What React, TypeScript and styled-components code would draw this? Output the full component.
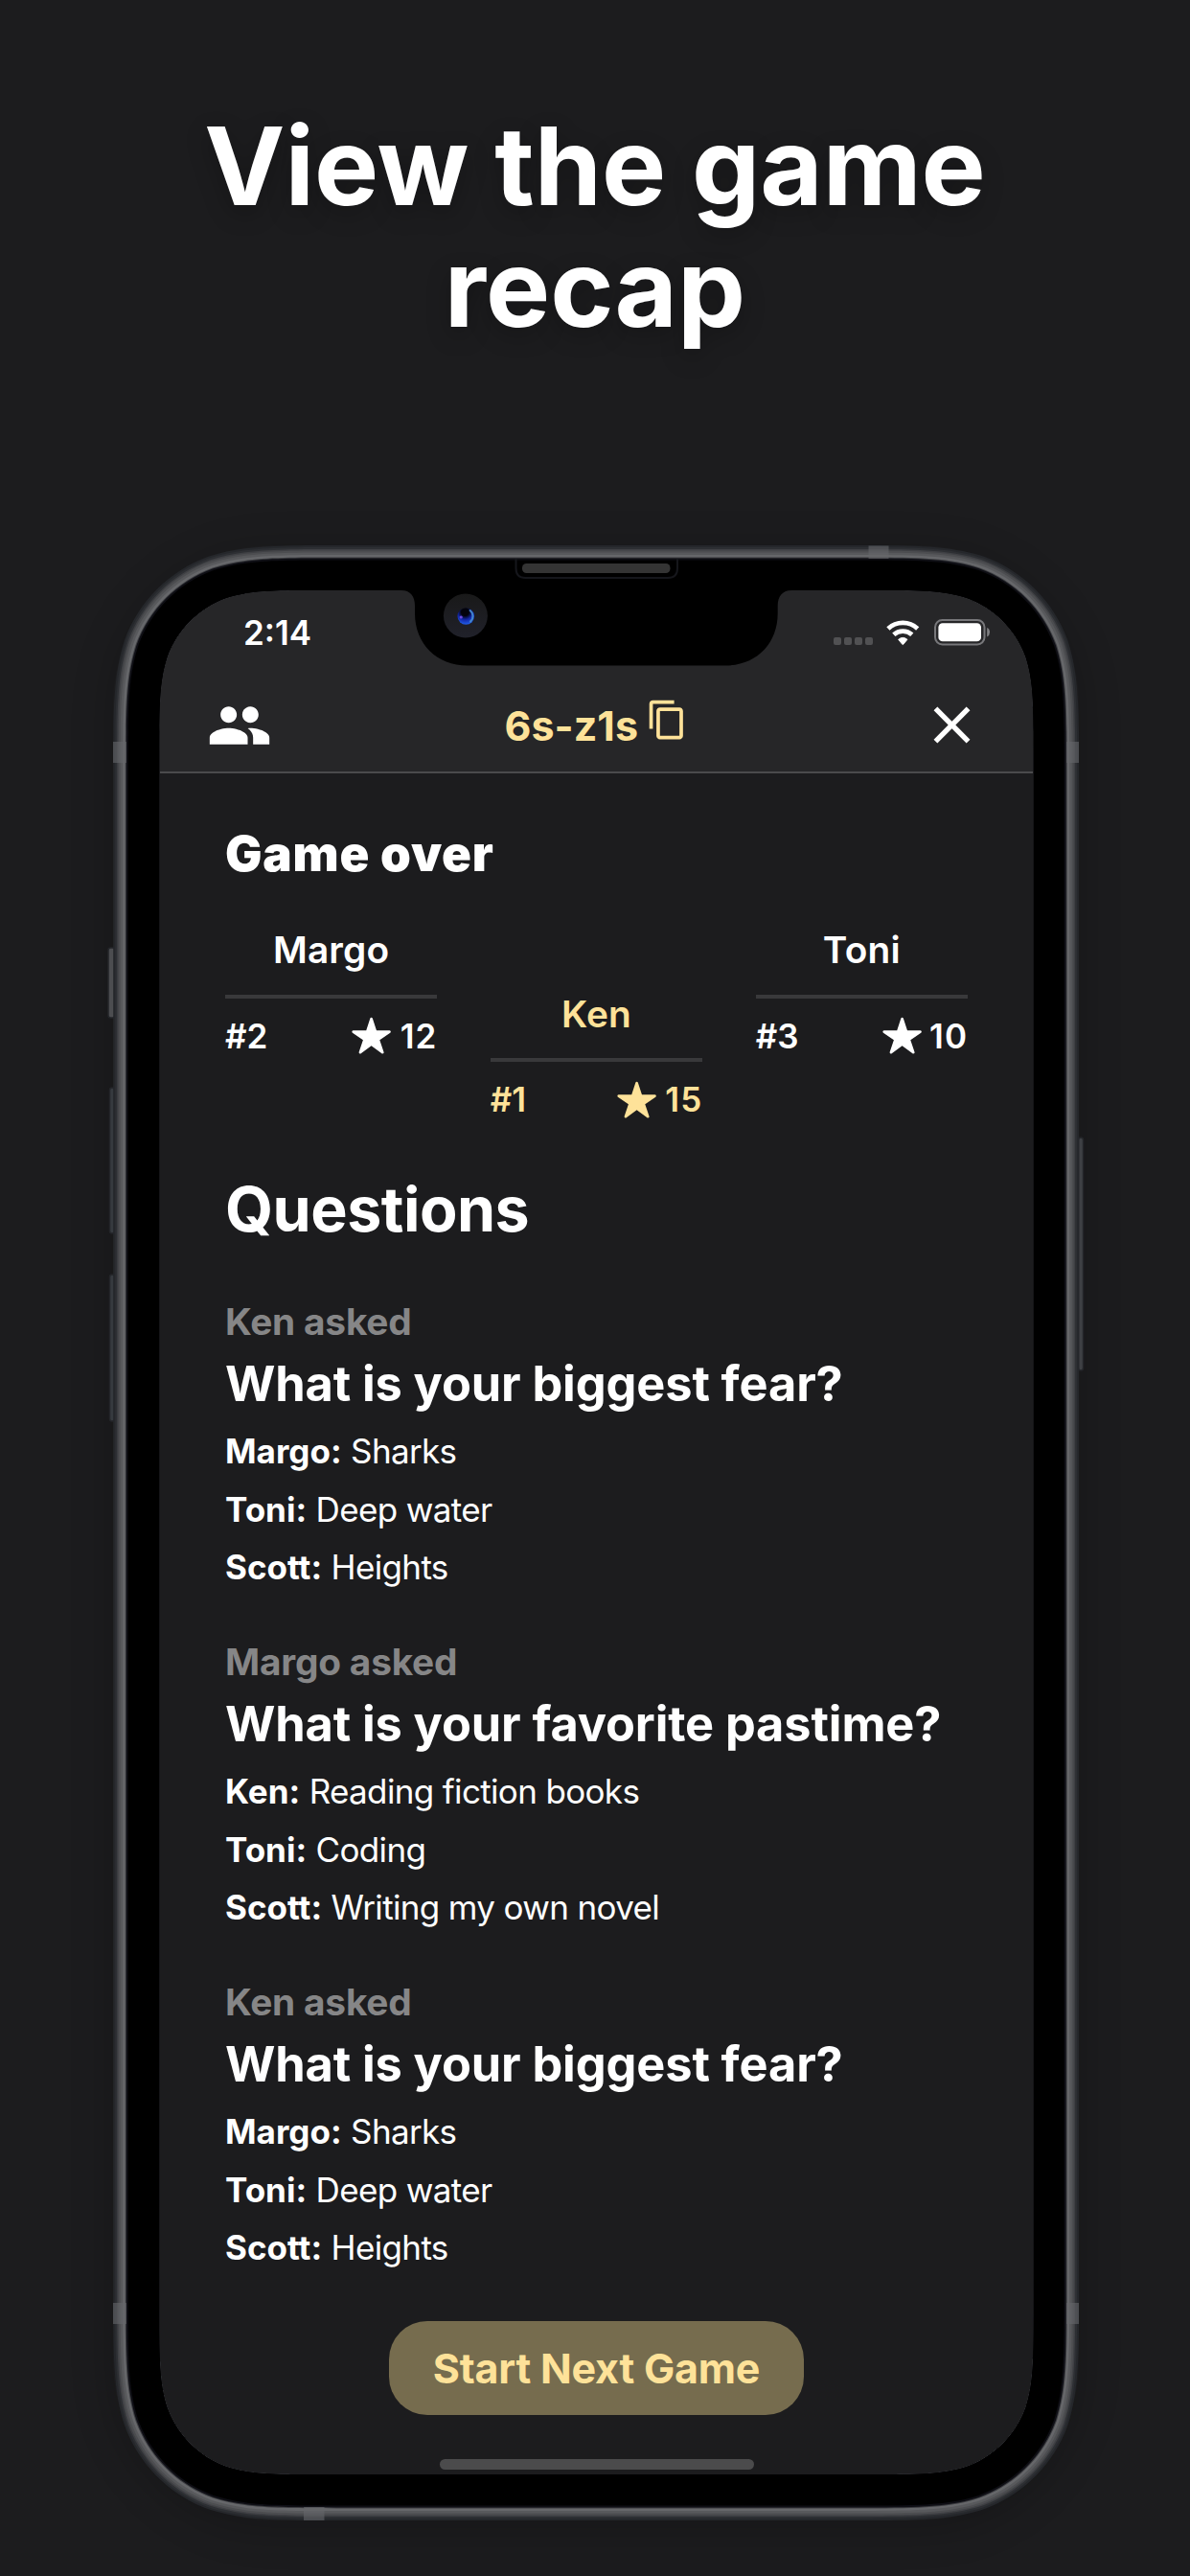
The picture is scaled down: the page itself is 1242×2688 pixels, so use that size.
import React from "react";
import styled, { createGlobalStyle } from "styled-components";
import { MdClose, MdContentCopy, MdPeople } from "react-icons/md";
import { IoStar } from "react-icons/io5";

const colors = {
  background: "#1c1c1e",
  header: "#262628",
  headerLine: "#4b4b4d",
  text: "#ffffff",
  muted: "#868687",
  gold: "#fee299",
  goldFill: "#766c4e",
  divider: "#39393b",
};

const GlobalStyle = createGlobalStyle`
  * { box-sizing: border-box; }
  body {
    margin: 0;
    background: ${colors.background};
    color: ${colors.text};
    font-family: Inter, "Liberation Sans", sans-serif;
  }
`;

const Page = styled.main`
  width: 1242px;
  height: 2688px;
  padding-top: 110px;
  display: flex;
  flex-direction: column;
  align-items: center;
  overflow: hidden;
  background: ${colors.background};
`;

const Headline = styled.h1`
  margin: 0 0 205px;
  width: 900px;
  text-align: center;
  font-size: 112.8px;
  font-weight: 700;
  line-height: 127px;
  text-shadow: 0 8px 24px rgba(0, 0, 0, 0.25);
`;

const Phone = styled.section`
  position: relative;
  flex: none;
  width: 1008px;
  height: 2061px;
  margin-left: 2px;
  padding: 47px 47px 48px 48px;
  border-radius: 165px;
  box-shadow: 0 8px 44px rgba(0, 0, 0, 0.22);
`;

const PhoneBody = styled.svg`
  position: absolute;
  inset: 0;
  width: 1008px;
  height: 2061px;
  overflow: visible;
  pointer-events: none;
`;

const Screen = styled.div`
  height: 1966px;
  border-radius: 100px;
  overflow: hidden;
  display: flex;
  flex-direction: column;
  align-items: stretch;
  background: ${colors.background};
`;

const Header = styled.header`
  flex: none;
  height: 191px;
  border-bottom: 2px solid ${colors.headerLine};
  background: ${colors.header};
`;

const StatusBar = styled.div`
  height: 92px;
  padding: 22px 46px 26px 88px;
  display: flex;
  justify-content: space-between;
  align-items: center;
`;

const Clock = styled.span`
  font-size: 35px;
  font-weight: 600;
  line-height: 44px;
`;

const StatusIcons = styled.div`
  display: flex;
  align-items: center;
  gap: 14.7px;
`;

const SignalDots = styled.div`
  display: flex;
  gap: 3.5px;
  padding-top: 18px;
`;

const SignalDot = styled.i`
  width: 7.5px;
  height: 7.5px;
  border-radius: 2px;
  background: #515153;
`;

const NavBar = styled.nav`
  height: 97px;
  padding: 0 53px 0 50px;
  display: grid;
  grid-template-columns: 68px 1fr 65px;
  align-items: center;
`;

const IconButton = styled.button<{ $size: number }>`
  padding: 0;
  border: 0;
  background: none;
  color: inherit;
  display: flex;
  svg {
    width: ${(p) => p.$size}px;
    height: ${(p) => p.$size}px;
  }
`;

const RoomCode = styled.div`
  display: flex;
  justify-content: center;
  align-items: center;
  gap: 8px;
  color: ${colors.gold};
  font-size: 43px;
  font-weight: 700;
  line-height: 52px;
  padding-top: 2px;
  svg {
    width: 44.4px;
    height: 44.4px;
    margin-bottom: 13px;
  }
`;

const Content = styled.div`
  flex: 1;
  padding: 53px 69px 0;
  display: flex;
  flex-direction: column;
`;

const GameOver = styled.h2`
  margin: 0 0 45px;
  font-size: 51px;
  font-weight: 900;
  line-height: 62px;
  letter-spacing: 0.8px;
`;

const Podium = styled.div`
  display: grid;
  grid-template-columns: repeat(3, 1fr);
  column-gap: 55.5px;
  align-items: start;
`;

const Player = styled.div<{ $winner: boolean }>`
  margin-top: ${(p) => (p.$winner ? 66.6 : 0)}px;
  color: ${(p) => (p.$winner ? colors.gold : colors.text)};
`;

const PlayerName = styled.div`
  height: 74.6px;
  border-bottom: 4.6px solid ${colors.divider};
  font-size: 38.8px;
  font-weight: 600;
  line-height: 48px;
  letter-spacing: 0.2px;
  text-align: center;
`;

const PlayerStats = styled.div`
  margin-top: 17px;
  display: flex;
  justify-content: space-between;
  font-size: 35px;
  font-weight: 600;
  line-height: 44px;
`;

const Score = styled.span`
  display: flex;
  align-items: center;
  letter-spacing: 1px;
  svg {
    width: 43.2px;
    height: 43.2px;
  }
`;

const ScoreValue = styled.span`
  width: 47px;
  text-align: right;
`;

const QuestionsTitle = styled.h2`
  margin: 54px 0 54px;
  font-size: 64.5px;
  font-weight: 700;
  line-height: 78px;
  letter-spacing: -0.5px;
`;

const RoundList = styled.div`
  display: flex;
  flex-direction: column;
  gap: 44.4px;
`;

const Asker = styled.div`
  color: ${colors.muted};
  font-size: 38.8px;
  font-weight: 700;
  line-height: 48px;
  letter-spacing: -0.2px;
`;

const Question = styled.h3`
  margin: 10.3px 0 8.5px;
  font-size: 50.5px;
  font-weight: 700;
  line-height: 62px;
  letter-spacing: -0.12px;
`;

const Answer = styled.div`
  display: flex;
  gap: 9.5px;
  font-size: 35px;
  line-height: 60.6px;
  letter-spacing: -0.65px;
  b {
    font-weight: 700;
    letter-spacing: 0;
  }
`;

const StartButton = styled.button`
  align-self: center;
  width: 433px;
  height: 98px;
  margin-top: 46px;
  padding: 0;
  border: 0;
  border-radius: 40px;
  background: ${colors.goldFill};
  color: ${colors.gold};
  font: 700 43px/52px Inter, "Liberation Sans", sans-serif;
  letter-spacing: -0.2px;
`;

const HomeIndicator = styled.div`
  flex: none;
  align-self: center;
  width: 328px;
  height: 11px;
  margin-bottom: 5px;
  border-radius: 6px;
  background: #4b4b4c;
`;

/* Rounded rectangle whose corners ease into the straight edges. */
function smoothRect(x0: number, y0: number, x1: number, y1: number, r: number) {
  const corner = (cx: number, cy: number, ux: number, uy: number, vx: number, vy: number) => {
    // (u) points back along the incoming edge, (v) along the outgoing one
    const pt = (a: number, b: number) =>
      `${(cx + r * (a * ux + b * vx)).toFixed(2)} ${(cy + r * (a * uy + b * vy)).toFixed(2)}`;
    return (
      `L${pt(1.5287, 0)}` +
      `C${pt(1.0885, 0)} ${pt(0.8684, 0)} ${pt(0.6315, 0.0749)}` +
      `C${pt(0.3728, 0.169)} ${pt(0.169, 0.3728)} ${pt(0.0749, 0.6315)}` +
      `C${pt(0, 0.8684)} ${pt(0, 1.0885)} ${pt(0, 1.5287)}`
    );
  };
  return (
    `M${(x0 + x1) / 2} ${y0}` +
    corner(x1, y0, -1, 0, 0, 1) +
    corner(x1, y1, 0, -1, -1, 0) +
    corner(x0, y1, 1, 0, 0, -1) +
    corner(x0, y0, 0, 1, 1, 0) +
    "Z"
  );
}

const screenHole = smoothRect(166.5, 616, 1078.5, 2582, 110);

const rimLayers: [number, string][] = [
  [0, "#25272b"],
  [2, "#2d2f33"],
  [4, "#3f4044"],
  [5.5, "#4c4d50"],
  [7.5, "#58595c"],
  [10, "#66676a"],
  [12.6, "#3a3b3f"],
  [13.6, "#0e0e14"],
  [15.5, "#000000"],
];

const sideKeys: [number, number, number, number, string][] = [
  [113, 989, 7, 73, "#4c4d50"],
  [114.5, 1135, 5, 152, "#363a3f"],
  [114.5, 1330, 5, 153, "#363a3f"],
  [1125.5, 1187, 5, 243, "#3e4044"],
];

const antennaBands: [number, number, number, number][] = [
  [906.5, 569.5, 21, 13.5],
  [317, 2616, 21.5, 14],
  [118, 774, 14, 22],
  [1113, 774, 13, 22],
  [118, 2403, 14, 22],
  [1113, 2403, 13, 22],
];

const PhoneFrame = () => (
  <PhoneBody viewBox="118 569 1008 2061" aria-hidden>
    <defs>
      <linearGradient id="camera" x1="0" y1="0" x2="0" y2="1">
        <stop offset="0" stopColor="#191919" />
        <stop offset="1" stopColor="#20212a" />
      </linearGradient>
      <radialGradient id="lens" cx="0.45" cy="0.25" r="0.75">
        <stop offset="0.3" stopColor="#03030c" />
        <stop offset="0.6" stopColor="#1226a8" />
        <stop offset="0.95" stopColor="#2058e0" />
      </radialGradient>
    </defs>
    {sideKeys.map(([x, y, w, h, fill]) => (
      <rect key={y} x={x} y={y} width={w} height={h} rx={2.5} fill={fill} stroke="#24262a" strokeWidth={1.5} />
    ))}
    {rimLayers.map(([inset, fill]) => (
      <path
        key={inset}
        fill={fill}
        fillRule="evenodd"
        d={smoothRect(118.2 + inset, 569 + inset, 1126.2 - inset, 2630 - inset, 157 - inset) + screenHole}
      />
    ))}
    {antennaBands.map(([x, y, w, h]) => (
      <rect key={`${x}-${y}`} x={x} y={y} width={w} height={h} fill="#66676a" opacity={0.6} />
    ))}
    <path d="M419 615H826V616C817 616 811.7 622 811.7 632V640C811.7 672 789 694.5 757 694.5H488C456 694.5 433 672 433 640V632C433 622 428 616 419 616Z" />
    <path d="M538.5 583V593Q538.5 603 548.5 603H697Q707 603 707 593V583" fill="none" stroke="#15161b" strokeWidth={2} />
    <rect x={545} y={588} width={154.5} height={10} rx={4.5} fill="#343434" />
    <circle cx={485.9} cy={642.5} r={23} fill="url(#camera)" />
    <circle cx={486.3} cy={643} r={8.8} fill="url(#lens)" />
    <path d="M490.6 637A7.6 7.6 0 0 1 491 648.6" fill="none" stroke="#4488cc" strokeWidth={2} strokeLinecap="round" />
    <circle cx={481.2} cy={644} r={1.6} fill="#6a4be0" />
  </PhoneBody>
);

const WifiIcon = () => (
  <svg width="34.6" height="27" viewBox="0 0 34.6 27">
    <g fill="none" stroke="#fff" strokeWidth="4.7">
      <path d="M1.9 9A22.6 22.6 0 0 1 32.7 9" />
      <path d="M7.8 15.3A13.9 13.9 0 0 1 26.8 15.3" />
    </g>
    <path
      d="M12.6 20.3A7.4 7.4 0 0 1 22 20.3L17.9 25.3Q17.3 25.9 16.7 25.3Z"
      fill="#fff"
      stroke="#fff"
      strokeWidth="0.8"
      strokeLinejoin="round"
    />
  </svg>
);

const BatteryIcon = () => (
  <svg width="58.5" height="27.5" viewBox="0 0 58.5 27.5">
    <rect x="1" y="1" width="51.5" height="25.5" rx="7.5" fill="none" stroke="#77777a" strokeWidth="2" />
    <rect x="4.4" y="4.2" width="44.6" height="19.1" rx="4.4" fill="#fff" />
    <path d="M55.2 9Q58 10.4 58 13.7T55.2 18.4Z" fill="#808083" />
  </svg>
);

type Round = { asker: string; question: string; answers: [string, string][] };

const fearRound: Round = {
  asker: "Ken",
  question: "What is your biggest fear?",
  answers: [
    ["Margo", "Sharks"],
    ["Toni", "Deep water"],
    ["Scott", "Heights"],
  ],
};

const rounds: Round[] = [
  fearRound,
  {
    asker: "Margo",
    question: "What is your favorite pastime?",
    answers: [
      ["Ken", "Reading fiction books"],
      ["Toni", "Coding"],
      ["Scott", "Writing my own novel"],
    ],
  },
  fearRound,
];

const players = [
  { name: "Margo", rank: 2, score: 12 },
  { name: "Ken", rank: 1, score: 15 },
  { name: "Toni", rank: 3, score: 10 },
];

export default function App() {
  return (
    <Page>
      <GlobalStyle />
      <Headline>
        View the game
        <br />
        recap
      </Headline>
      <Phone>
        <Screen>
          <Header>
            <StatusBar>
              <Clock>2:14</Clock>
              <StatusIcons>
                <SignalDots>
                  {[0, 1, 2, 3].map((i) => (
                    <SignalDot key={i} />
                  ))}
                </SignalDots>
                <WifiIcon />
                <BatteryIcon />
              </StatusIcons>
            </StatusBar>
            <NavBar>
              <IconButton $size={68} aria-label="Players">
                <MdPeople />
              </IconButton>
              <RoomCode>
                6s-z1s
                <MdContentCopy />
              </RoomCode>
              <IconButton $size={65} aria-label="Close">
                <MdClose />
              </IconButton>
            </NavBar>
          </Header>
          <Content>
            <GameOver>Game over</GameOver>
            <Podium>
              {players.map((p) => (
                <Player key={p.name} $winner={p.rank === 1}>
                  <PlayerName>{p.name}</PlayerName>
                  <PlayerStats>
                    <span>#{p.rank}</span>
                    <Score>
                      <IoStar />
                      <ScoreValue>{p.score}</ScoreValue>
                    </Score>
                  </PlayerStats>
                </Player>
              ))}
            </Podium>
            <QuestionsTitle>Questions</QuestionsTitle>
            <RoundList>
              {rounds.map((round, i) => (
                <article key={i}>
                  <Asker>{round.asker} asked</Asker>
                  <Question>{round.question}</Question>
                  {round.answers.map(([name, answer]) => (
                    <Answer key={name}>
                      <b>{name}:</b>
                      <span>{answer}</span>
                    </Answer>
                  ))}
                </article>
              ))}
            </RoundList>
            <StartButton>Start Next Game</StartButton>
          </Content>
          <HomeIndicator />
        </Screen>
        <PhoneFrame />
      </Phone>
    </Page>
  );
}
